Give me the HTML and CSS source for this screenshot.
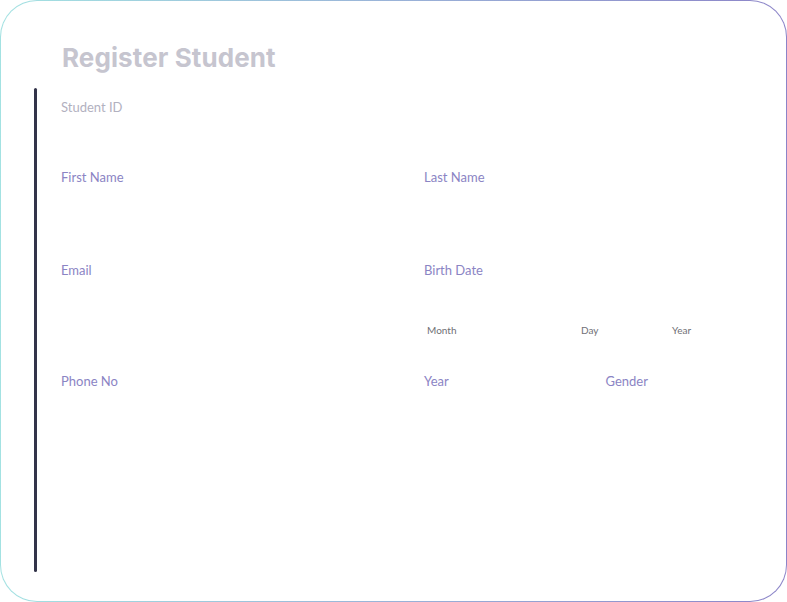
FILE: index.html
```html
<!DOCTYPE html>
<html lang="en">
<head>
<meta charset="utf-8">
<title>Register Student</title>
<link rel="stylesheet" href="styles.css">
</head>
<body>
<div class="card">
  <h1 class="title">Register Student</h1>
  <div class="body">
    <div class="bar"></div>
    <form class="form">
      <div class="field field-id">
        <label class="label label-muted">Student ID</label>
        <input class="input" type="text">
      </div>
      <div class="row row-names">
        <div class="field">
          <label class="label">First Name</label>
          <input class="input" type="text">
        </div>
        <div class="field">
          <label class="label">Last Name</label>
          <input class="input" type="text">
        </div>
      </div>
      <div class="row row-contact">
        <div class="field">
          <label class="label">Email</label>
          <input class="input" type="email">
        </div>
        <div class="field">
          <label class="label">Birth Date</label>
          <div class="date">
            <span class="sub">Month</span>
            <span class="sub">Day</span>
            <span class="sub">Year</span>
          </div>
        </div>
      </div>
      <div class="row row-last">
        <div class="field">
          <label class="label">Phone No</label>
          <input class="input" type="tel">
        </div>
        <div class="split">
          <div class="field">
            <label class="label">Year</label>
          </div>
          <div class="field">
            <label class="label">Gender</label>
          </div>
        </div>
      </div>
    </form>
  </div>
</div>
</body>
</html>
```

FILE: styles.css
```css
* { box-sizing: border-box; }
html, body { margin: 0; padding: 0; background: #ffffff; }
body { font-family: Lato, "Liberation Sans", sans-serif; }

.card {
  width: 787px;
  height: 602px;
  border: 1px solid transparent;
  border-radius: 37px;
  background:
    linear-gradient(#ffffff, #ffffff) padding-box,
    linear-gradient(90deg, #a3e2e2 0%, #9ab3d8 50%, #8c84c8 100%) border-box;
  padding: 41px 0 0 33px;
}

.title {
  margin: 0 0 0 28px;
  font-family: Inter, Lato, sans-serif;
  font-size: 26px;
  line-height: 32px;
  font-weight: 700;
  color: #c6c5cf;
  letter-spacing: 0.1px;
}

.body {
  display: flex;
  margin-top: 14px;
}

.bar {
  width: 3px;
  height: 484px;
  background: #33344a;
  border-radius: 2px;
  flex: none;
}

.form {
  margin-left: 24px;
  width: 664px;
  padding-top: 11px;
  display: flex;
  flex-direction: column;
}

.field { display: flex; flex-direction: column; }

.label {
  font-size: 13px;
  line-height: 16px;
  color: #8b84c4;
}
.label-muted { color: #b2b1bf; }

.input {
  border: none;
  outline: none;
  background: transparent;
  padding: 0;
  font: inherit;
}

.field-id .input { height: 54px; }

.row {
  display: grid;
  grid-template-columns: 1fr 1fr;
  column-gap: 62px;
}
.row-names .input { height: 77px; }
.row-contact { height: 111px; }
.row-contact .input { height: 95px; }

.date {
  display: grid;
  grid-template-columns: 154px 91px 1fr;
  margin-top: 46px;
  padding-left: 3px;
}
.sub {
  font-size: 10px;
  line-height: 12px;
  color: #707075;
}

.split {
  display: grid;
  grid-template-columns: 1fr 1fr;
  column-gap: 62px;
}
```
